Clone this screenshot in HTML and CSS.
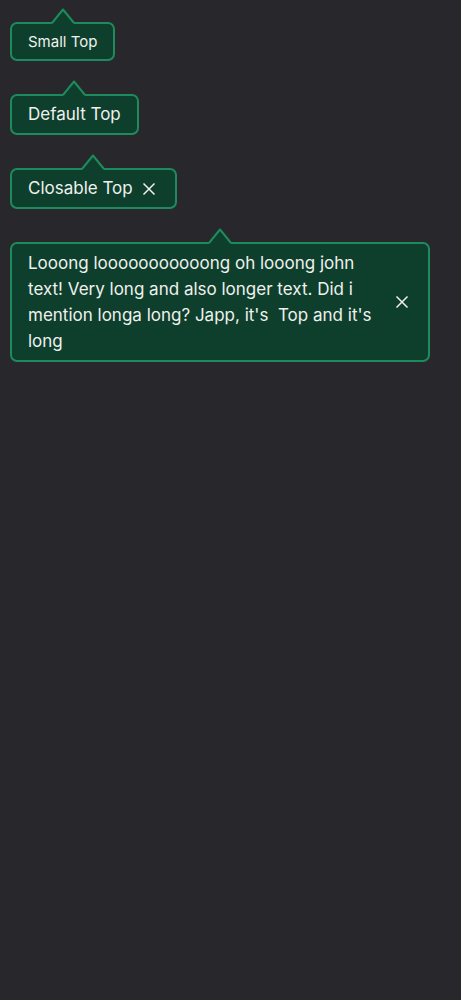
FILE: index.html
```html
<!DOCTYPE html>
<html lang="en">
<head>
<meta charset="utf-8">
<title>Tooltips</title>
<link rel="stylesheet" href="styles.css">
</head>
<body>
<div class="stack">
  <div class="tip">
    <svg class="tip-arrow" width="24" height="17" viewBox="0 0 24 17" aria-hidden="true">
      <polygon class="arrow-fill" points="0,17 12,1.5 24,17"/>
      <polyline class="arrow-stroke" points="1,15 12,1.5 23,15"/>
    </svg>
    <div class="tip-box tip-small"><span class="tip-text">Small Top</span></div>
  </div>

  <div class="tip">
    <svg class="tip-arrow" width="24" height="17" viewBox="0 0 24 17" aria-hidden="true">
      <polygon class="arrow-fill" points="0,17 12,1.5 24,17"/>
      <polyline class="arrow-stroke" points="1,15 12,1.5 23,15"/>
    </svg>
    <div class="tip-box tip-default"><span class="tip-text">Default Top</span></div>
  </div>

  <div class="tip">
    <svg class="tip-arrow" width="24" height="17" viewBox="0 0 24 17" aria-hidden="true">
      <polygon class="arrow-fill" points="0,17 12,1.5 24,17"/>
      <polyline class="arrow-stroke" points="1,15 12,1.5 23,15"/>
    </svg>
    <div class="tip-box tip-default tip-closable">
      <span class="tip-text">Closable Top</span>
      <button class="tip-close" type="button" aria-label="Close">
        <svg width="20" height="20" viewBox="0 0 20 20"><path d="M4.5 4.5L15.5 15.5M15.5 4.5L4.5 15.5"/></svg>
      </button>
    </div>
  </div>

  <div class="tip">
    <svg class="tip-arrow" width="24" height="17" viewBox="0 0 24 17" aria-hidden="true">
      <polygon class="arrow-fill" points="0,17 12,1.5 24,17"/>
      <polyline class="arrow-stroke" points="1,15 12,1.5 23,15"/>
    </svg>
    <div class="tip-box tip-long tip-closable">
      <span class="tip-text">Looong looooooooooong oh looong john text! Very long and also longer text. Did i mention longa long? Japp, it's &nbsp;Top and it's long</span>
      <button class="tip-close" type="button" aria-label="Close">
        <svg width="20" height="20" viewBox="0 0 20 20"><path d="M4.5 4.5L15.5 15.5M15.5 4.5L4.5 15.5"/></svg>
      </button>
    </div>
  </div>
</div>
</body>
</html>
```
FILE: styles.css
```css
html, body {
  margin: 0;
  padding: 0;
  background: #28272c;
}

body {
  font-family: "Inter", "Noto Sans", sans-serif;
  color: #eef1ee;
}

.stack {
  display: flex;
  flex-direction: column;
  align-items: flex-start;
  gap: 19px;
  padding: 8px 10px;
}

.tip {
  position: relative;
  padding-top: 14px;
}

.tip-arrow {
  position: absolute;
  top: 0;
  left: 50%;
  transform: translateX(-50%);
  display: block;
}

.arrow-fill {
  fill: #0e3f2c;
}

.arrow-stroke {
  fill: none;
  stroke: #1d8b5d;
  stroke-width: 2;
  stroke-linejoin: round;
}

.tip-box {
  box-sizing: border-box;
  display: flex;
  align-items: center;
  background: #0e3f2c;
  border: 2px solid #1d8b5d;
  border-radius: 7px;
  padding: 6px 16px;
  font-size: 17px;
  line-height: 25px;
}

.tip-small {
  font-size: 15px;
  line-height: 21px;
  padding: 7px 16px;
}

.tip-closable {
  gap: 6px;
}

.tip-long {
  width: 420px;
  line-height: 26px;
  gap: 12px;
}

.tip-long .tip-text {
  flex: 1;
}

.tip-close {
  flex: none;
  width: 20px;
  height: 20px;
  padding: 0;
  margin: 0;
  border: 0;
  background: none;
  display: flex;
  align-items: center;
  justify-content: center;
  cursor: pointer;
}

.tip-close svg {
  display: block;
  fill: none;
  stroke: #eef1ee;
  stroke-width: 1.5;
}
```
